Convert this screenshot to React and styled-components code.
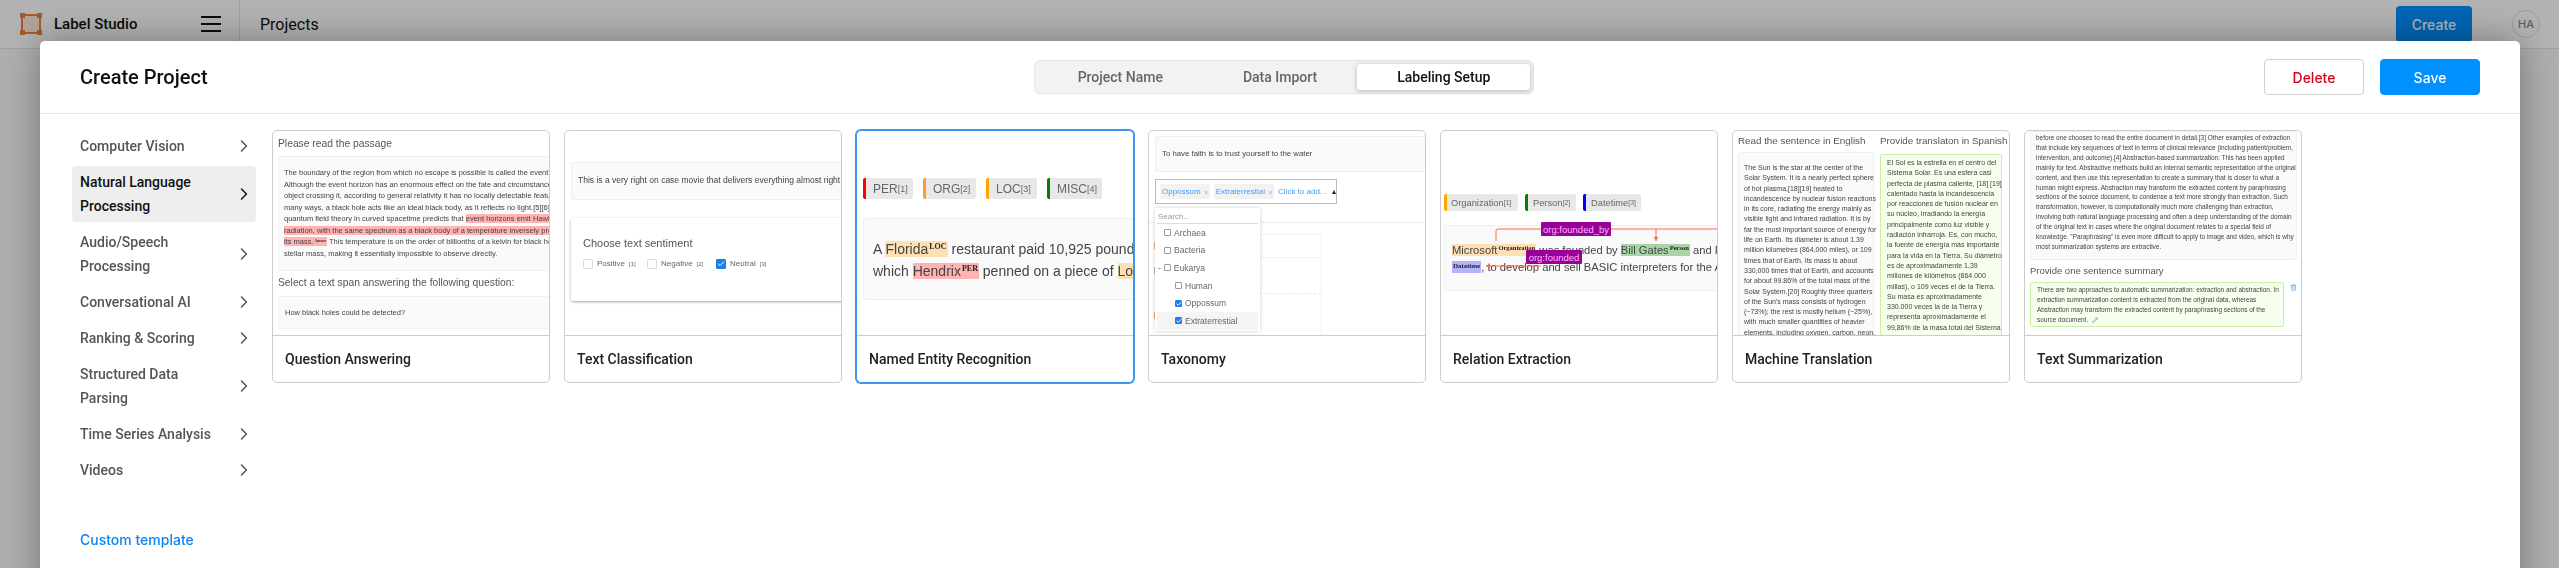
import React from 'react';
import styled, { createGlobalStyle } from 'styled-components';
import { ChevronRight, Check, Trash2, Pencil } from 'lucide-react';

const Global = createGlobalStyle`
  html, body { margin: 0; padding: 0; height: 100%; overflow: hidden; background: #fafafa; }
  * { box-sizing: border-box; }
  body { font-family: Roboto, "Liberation Sans", sans-serif; color: #111; }
`;

const Page = styled.div`
  height: 568px;
  overflow: hidden;
`;

const TopBar = styled.header`
  height: 49px;
  display: flex;
  align-items: center;
  background: #fff;
  border-bottom: 1px solid #e4e4e4;
`;

const Brand = styled.div`
  width: 240px;
  height: 48px;
  display: flex;
  align-items: center;
  padding-left: 20px;
  border-right: 1px solid #e4e4e4;
`;

const BrandName = styled.span`
  font-size: 15px;
  font-weight: 500;
  margin-left: 12px;
  width: 147px;
`;

const BarTitle = styled.span`
  font-size: 16px;
  margin-left: 20px;
  flex: 1;
`;

const CreateButton = styled.button`
  width: 76px;
  height: 36px;
  margin-right: 40px;
  border: 0;
  border-radius: 4px;
  background: #0090ff;
  color: #fff;
  font: 500 14px Inter, sans-serif;
`;

const Avatar = styled.div`
  width: 28px;
  height: 28px;
  margin-right: 19px;
  border-radius: 50%;
  border: 1px solid #ddd;
  display: grid;
  place-items: center;
  font: 500 11px Inter, sans-serif;
  color: #888;
`;

const Overlay = styled.div`
  position: fixed;
  inset: 0;
  padding: 41px 39px 0 40px;
  background: rgba(0, 0, 0, 0.3);
`;

const Modal = styled.div`
  height: 600px;
  background: #fff;
  border-radius: 5px 5px 0 0;
  box-shadow: 0 0 36px rgba(0, 0, 0, 0.35);
`;

const ModalHeader = styled.div`
  height: 73px;
  padding: 0 40px;
  display: grid;
  grid-template-columns: 224px 1fr auto;
  align-items: center;
  border-bottom: 1px solid #e4e4e4;
`;

const Title = styled.h1`
  margin: 0;
  font-size: 20px;
  font-weight: 500;
  white-space: nowrap;
`;

const Tabs = styled.div`
  justify-self: center;
  height: 34px;
  padding: 3px;
  display: flex;
  border: 1px solid #e6e6e6;
  border-radius: 6px;
  background: #f2f2f2;
`;

const Tab = styled.div`
  height: 26px;
  padding: 0 40px;
  display: flex;
  align-items: center;
  font-size: 14px;
  font-weight: 500;
  border-radius: 4px;
  color: ${p => (p.$active ? '#111' : '#666')};
  background: ${p => (p.$active ? '#fff' : 'transparent')};
  box-shadow: ${p => (p.$active ? '0 1px 5px rgba(0,0,0,.25)' : 'none')};
`;

const Actions = styled.div`
  display: flex;
  gap: 16px;
`;

const ActionButton = styled.button`
  width: 100px;
  height: 36px;
  border-radius: 4px;
  font: 500 14px Inter, sans-serif;
  border: 1px solid ${p => (p.$primary ? '#0090ff' : '#d0d0d0')};
  background: ${p => (p.$primary ? '#0090ff' : '#fff')};
  color: ${p => (p.$primary ? '#fff' : '#d0021b')};
`;

const Body = styled.div`
  display: flex;
  padding: 14px 0 0 32px;
`;

const Sidebar = styled.nav`
  width: 184px;
  flex-shrink: 0;
  margin-right: 16px;
  display: flex;
  flex-direction: column;
`;

const SideItem = styled.div`
  margin: 2px 0;
  padding: 4px 8px;
  display: flex;
  align-items: center;
  justify-content: space-between;
  font-size: 14px;
  line-height: 24px;
  font-weight: 500;
  border-radius: 4px;
  color: ${p => (p.$active ? '#111' : '#555')};
  background: ${p => (p.$active ? '#eee' : 'transparent')};
  span { max-width: 145px; }
  svg { flex-shrink: 0; margin-right: -6px; }
`;

const CustomLink = styled.a`
  display: block;
  margin: 40px 0 0 8px;
  font-family: Inter, sans-serif;
  font-size: 14px;
  font-weight: 500;
  line-height: 24px;
  color: #0b84f3;
`;

const Grid = styled.div`
  display: grid;
  grid-template-columns: repeat(7, 278px);
  gap: 14px;
  align-items: start;
  margin-top: 2px;
`;

const Card = styled.div`
  height: 253px;
  border-radius: 5px;
  overflow: hidden;
  background: #fff;
  border: 1px solid #ccc;
  box-shadow: ${p => (p.$selected ? '0 0 0 1px #3d94f0' : 'none')};
  border-color: ${p => (p.$selected ? '#3d94f0' : '#ccc')};
`;

const Preview = styled.div`
  position: relative;
  height: 204px;
  overflow: hidden;
  padding: ${p => p.$pad || '0'};
  font-family: "Liberation Sans", Arial, sans-serif;
  color: #444;
  filter: blur(0.25px);
`;

const CardName = styled.div`
  height: 47px;
  padding-left: 12px;
  display: flex;
  align-items: center;
  font-size: 14px;
  font-weight: 500;
  color: #222;
  border-top: 1px solid #ccc;
`;

const Heading = styled.div`
  font-size: ${p => p.$size || 10.3}px;
  line-height: 12px;
  white-space: nowrap;
  margin-top: ${p => p.$top || 0}px;
  color: #555;
`;

const TextBox = styled.div`
  width: ${p => p.$width || 340}px;
  height: ${p => p.$height}px;
  margin-top: ${p => p.$top || 0}px;
  padding: ${p => p.$pad || '0 6px'};
  background: #fafafa;
  border: 1px solid #f0f0f0;
  border-radius: 2px;
  font-size: ${p => p.$size || 7.5}px;
  line-height: ${p => p.$lh || 11.5}px;
  white-space: nowrap;
  display: ${p => (p.$center ? 'flex' : 'block')};
  align-items: center;
  color: #444;
`;

const Line = styled.div`
  white-space: nowrap;
`;

const Mark = styled.span`
  background: ${p => p.$color || '#ffb3b3'};
  color: #444;
`;

const Tag = styled.sup`
  font: bold ${p => p.$size || 3.5}px "Liberation Serif", serif;
  vertical-align: ${p => p.$up || 2}px;
  line-height: 0;
  color: #222;
  margin: 0 1px;
`;

const Choices = styled.div`
  width: 320px;
  height: 83px;
  margin-top: 18px;
  padding: 19px 12px 0;
  border-radius: 2px;
  background: #fff;
  box-shadow: 0 1px 3px rgba(0, 0, 0, 0.35);
`;

const ChoiceRow = styled.div`
  display: flex;
  margin-top: 9px;
  font-size: 8px;
  line-height: 12px;
  color: #666;
`;

const Choice = styled.label`
  display: flex;
  align-items: center;
  width: ${p => p.$width}px;
  gap: 4px;
`;

const Box = styled.span`
  width: ${p => p.$size || 10}px;
  height: ${p => p.$size || 10}px;
  flex-shrink: 0;
  display: grid;
  place-items: center;
  border-radius: 1px;
  border: 1px solid ${p => (p.$on ? '#1a7ff0' : p.$dark ? '#999' : '#ddd')};
  background: ${p => (p.$on ? '#1a7ff0' : '#fff')};
  color: #fff;
`;

const Small = styled.sup`
  font-size: 75%;
  line-height: 0;
  vertical-align: 30%;
`;

const LabelRow = styled.div`
  display: flex;
  gap: ${p => p.$gap}px;
  margin-top: ${p => p.$top}px;
`;

const EntityLabel = styled.div`
  height: ${p => p.$height}px;
  width: ${p => p.$width}px;
  padding-left: ${p => p.$indent}px;
  display: flex;
  align-items: center;
  white-space: nowrap;
  font-size: ${p => p.$size}px;
  color: #666;
  background: #e8e8e8;
  border-left: 3px solid ${p => p.$color};
  border-radius: 2px;
`;

const MultiSelect = styled.div`
  width: 182px;
  height: 25px;
  margin-top: 7px;
  padding-left: 4px;
  display: flex;
  align-items: center;
  gap: 4px;
  border: 1px solid #bbb;
  font-size: 8px;
  color: #3d9eff;
`;

const Pill = styled.span`
  height: 15px;
  padding: 0 2px;
  display: flex;
  align-items: center;
  gap: 4px;
  white-space: nowrap;
  background: #f2f2f2;
  border-radius: 1px;
  i { font-style: normal; font-size: 6px; color: #999; }
`;

const Caret = styled.span`
  width: 0;
  height: 0;
  margin-left: 1px;
  border: 2.5px solid transparent;
  border-top: 0;
  border-bottom: 4px solid #222;
`;

const FaintRule = styled.div`
  height: 1px;
  margin: 18px 0 0 -6px;
  background: #eee;
`;

const FaintTable = styled.div`
  width: 167px;
  height: 120px;
  margin-top: 11px;
  border: 1px solid #f2f2f2;
  border-left: 0;
`;

const FaintHead = styled.div`
  height: 23px;
  border-bottom: 1px solid #f2f2f2;
`;

const FaintDash = styled.div`
  margin-top: 35px;
  border-top: 1px dashed #e8e8e8;
`;

const Tick = styled.span`
  position: absolute;
  left: 5px;
  top: ${p => p.$y}px;
  width: 1px;
  height: 7px;
  background: #e0b080;
`;

const Dropdown = styled.div`
  position: absolute;
  left: 6px;
  top: 77px;
  width: 105px;
  height: 123px;
  padding: 2px;
  background: #fff;
  box-shadow: 0 0 4px rgba(0, 0, 0, 0.2);
  font-size: 8.5px;
`;

const SearchLine = styled.div`
  height: 14px;
  padding-left: 1px;
  line-height: 13px;
  font-size: 8px;
  color: #999;
  border-bottom: 1px solid #ddd;
`;

const TreeRow = styled.div`
  height: 17.6px;
  padding-left: ${p => p.$indent}px;
  display: flex;
  align-items: center;
  gap: 3px;
  color: #666;
  background: ${p => (p.$hover ? '#f4f4f4' : 'transparent')};
`;

const Overlaid = styled.div`
  position: absolute;
  left: ${p => p.$x}px;
  top: ${p => p.$y}px;
  width: ${p => p.$w}px;
  height: 14px;
  display: grid;
  place-items: center;
  background: #990099;
  border-radius: 1px;
  font-size: 9.5px;
  color: #ffb3ff;
  white-space: nowrap;
`;

const Arrows = styled.svg`
  position: absolute;
  left: 0;
  top: 0;
`;

const Columns = styled.div`
  display: grid;
  grid-template-columns: 136px 122px;
  gap: 6px;
  margin-top: 4px;
`;

const AnswerBox = styled.div`
  margin-top: ${p => p.$top}px;
  width: ${p => p.$width}px;
  height: ${p => p.$height || 'auto'};
  padding: ${p => p.$pad};
  background: #f6ffed;
  border: 1px solid #c9efa8;
  border-radius: 2px;
  font-size: ${p => p.$size}px;
  line-height: ${p => p.$lh}px;
  color: #444;
`;

const TrashIcon = styled(Trash2)`
  position: absolute;
  left: 265px;
  top: 153px;
  color: #3d9eff;
`;

const PenIcon = styled(Pencil)`
  margin-left: 2px;
  color: #3d9eff;
  vertical-align: -1px;
`;

const Logo = () => (
  <svg width="22" height="22" viewBox="0 0 22 22">
    <rect x="2" y="2" width="18" height="18" fill="#ffeadb" />
    <rect x="2" y="2" width="18" height="18" fill="none" stroke="#ec8140" strokeWidth="2" />
    <rect x="0" y="0" width="5" height="5" fill="#ec8140" />
    <rect x="17" y="0" width="5" height="5" fill="#ec8140" />
    <rect x="0" y="17" width="5" height="5" fill="#ec8140" />
    <rect x="17" y="17" width="5" height="5" fill="#ec8140" />
  </svg>
);

const Burger = () => (
  <svg width="20" height="16" viewBox="0 0 20 16">
    <path d="M0 1h20M0 8h20M0 15h20" stroke="#111" strokeWidth="2" />
  </svg>
);

const passage = [
  'The boundary of the region from which no escape is possible is called the event horizon.',
  'Although the event horizon has an enormous effect on the fate and circumstances of an',
  'object crossing it, according to general relativity it has no locally detectable features. In',
  'many ways, a black hole acts like an ideal black body, as it reflects no light.[5][6] Moreover,',
];

const sunLines = [
  'The Sun is the star at the center of the',
  'Solar System. It is a nearly perfect sphere',
  'of hot plasma,[18][19] heated to',
  'incandescence by nuclear fusion reactions',
  'in its core, radiating the energy mainly as',
  'visible light and infrared radiation. It is by',
  'far the most important source of energy for',
  'life on Earth. Its diameter is about 1.39',
  'million kilometres (864,000 miles), or 109',
  'times that of Earth. Its mass is about',
  '330,000 times that of Earth, and accounts',
  'for about 99.86% of the total mass of the',
  'Solar System.[20] Roughly three quarters',
  "of the Sun's mass consists of hydrogen",
  '(~73%); the rest is mostly helium (~25%),',
  'with much smaller quantities of heavier',
  'elements, including oxygen, carbon, neon,',
];

const solLines = [
  'El Sol es la estrella en el centro del',
  'Sistema Solar. Es una esfera casi',
  'perfecta de plasma caliente, [18] [19]',
  'calentado hasta la incandescencia',
  'por reacciones de fusión nuclear en',
  'su núcleo, irradiando la energía',
  'principalmente como luz visible y',
  'radiación infrarroja. Es, con mucho,',
  'la fuente de energía más importante',
  'para la vida en la Tierra. Su diámetro',
  'es de aproximadamente 1,39',
  'millones de kilómetros (864.000',
  'millas), o 109 veces el de la Tierra.',
  'Su masa es aproximadamente',
  '330.000 veces la de la Tierra y',
  'representa aproximadamente el',
  '99,86% de la masa total del Sistema',
  'Solar. Alrededor de tres cuartos',
];

const summaryLines = [
  'before one chooses to read the entire document in detail.[3] Other examples of extraction',
  'that include key sequences of text in terms of clinical relevance (including patient/problem,',
  'intervention, and outcome).[4] Abstraction-based summarization: This has been applied',
  'mainly for text. Abstractive methods build an internal semantic representation of the original',
  'content, and then use this representation to create a summary that is closer to what a',
  'human might express. Abstraction may transform the extracted content by paraphrasing',
  'sections of the source document, to condense a text more strongly than extraction. Such',
  'transformation, however, is computationally much more challenging than extraction,',
  'involving both natural language processing and often a deep understanding of the domain',
  'of the original text in cases where the original document relates to a special field of',
  'knowledge. "Paraphrasing" is even more difficult to apply to image and video, which is why',
  'most summarization systems are extractive.',
];

const QuestionPreview = () => (
  <Preview $pad="0 0 0 5px">
    <Heading $top={7} $size={10.3}>Please read the passage</Heading>
    <TextBox $top={6} $height={115} $pad="10px 5px">
      {passage.map(l => <Line key={l}>{l}</Line>)}
      <Line>quantum field theory in curved spacetime predicts that <Mark>event horizons emit Hawking</Mark></Line>
      <Line><Mark>radiation, with the same spectrum as a black body of a temperature inversely proportional to</Mark></Line>
      <Line><Mark>its mass.<Tag>Answer</Tag></Mark> This temperature is on the order of billionths of a kelvin for black holes of</Line>
      <Line>stellar mass, making it essentially impossible to observe directly.</Line>
    </TextBox>
    <Heading $top={6} $size={10.3}>Select a text span answering the following question:</Heading>
    <TextBox $top={7} $height={33} $center>How black holes could be detected?</TextBox>
  </Preview>
);

const ClassificationPreview = () => (
  <Preview $pad="31px 0 0 6px">
    <TextBox $height={38} $center $size={8.5}>This is a very right on case movie that delivers everything almost right in your face.</TextBox>
    <Choices>
      <Heading $size={11}>Choose text sentiment</Heading>
      <ChoiceRow>
        <Choice $width={64}><Box />Positive<Small>[1]</Small></Choice>
        <Choice $width={69}><Box />Negative<Small>[2]</Small></Choice>
        <Choice><Box $on><Check size={8} strokeWidth={3} /></Box>Neutral<Small>[3]</Small></Choice>
      </ChoiceRow>
    </Choices>
  </Preview>
);

const NerPreview = () => (
  <Preview $pad="47px 0 0 6px">
    <LabelRow $gap={10} $top={0}>
      <EntityLabel $width={50} $height={21} $indent={7} $size={12} $color="#f00">PER<Small>[1]</Small></EntityLabel>
      <EntityLabel $width={53} $height={21} $indent={7} $size={12} $color="#f93">ORG<Small>[2]</Small></EntityLabel>
      <EntityLabel $width={51} $height={21} $indent={7} $size={12} $color="orange">LOC<Small>[3]</Small></EntityLabel>
      <EntityLabel $width={55} $height={21} $indent={7} $size={12} $color="green">MISC<Small>[4]</Small></EntityLabel>
    </LabelRow>
    <TextBox $top={19} $height={82} $width={360} $pad="19px 9px" $size={14} $lh={22}>
      <Line>A <Mark $color="#ffe0b3">Florida<Tag $size={8} $up={5}>LOC</Tag></Mark> restaurant paid 10,925 pounds for the drum kit</Line>
      <Line>which <Mark>Hendrix<Tag $size={8} $up={5}>PER</Tag></Mark> penned on a piece of <Mark $color="#ffe0b3">London</Mark> hotel</Line>
    </TextBox>
  </Preview>
);

const TaxonomyPreview = () => (
  <Preview $pad="5px 0 0 6px">
    <TextBox $height={36} $center $size={7.8}>To have faith is to trust yourself to the water</TextBox>
    <MultiSelect>
      <Pill>Oppossum <i>x</i></Pill>
      <Pill>Extraterrestial <i>x</i></Pill>
      <span>Click to add...</span>
      <Caret />
    </MultiSelect>
    <FaintRule />
    <FaintTable>
      <FaintHead />
      <FaintDash />
    </FaintTable>
    <Tick $y={111} />
    <Tick $y={136} />
    <Tick $y={181} />
    <Dropdown>
      <SearchLine>Search...</SearchLine>
      <TreeRow $indent={7}><Box $size={7} $dark />Archaea</TreeRow>
      <TreeRow $indent={7}><Box $size={7} $dark />Bacteria</TreeRow>
      <TreeRow $indent={1}>- <Box $size={7} $dark />Eukarya</TreeRow>
      <TreeRow $indent={18}><Box $size={7} $dark />Human</TreeRow>
      <TreeRow $indent={18}><Box $size={7} $on><Check size={6} strokeWidth={4} /></Box>Oppossum</TreeRow>
      <TreeRow $indent={18} $hover><Box $size={7} $on><Check size={6} strokeWidth={4} /></Box>Extraterrestial</TreeRow>
    </Dropdown>
  </Preview>
);

const RelationPreview = () => (
  <Preview $pad="63px 0 0 3px">
    <LabelRow $gap={7} $top={0}>
      <EntityLabel $width={74} $height={17} $indent={4} $size={9.3} $color="orange">Organization<Small>[1]</Small></EntityLabel>
      <EntityLabel $width={51} $height={17} $indent={5} $size={9.3} $color="green">Person<Small>[2]</Small></EntityLabel>
      <EntityLabel $width={58} $height={17} $indent={5} $size={9.3} $color="blue">Datetime<Small>[3]</Small></EntityLabel>
    </LabelRow>
    <TextBox $top={14} $height={66} $width={340} $pad="16px 7px" $size={11.2} $lh={17}>
      <Line><Mark $color="#ffe0b3">Microsoft<Tag $size={6.5} $up={4}>Organization</Tag></Mark> was founded by <Mark $color="#a8d5a8">Bill Gates<Tag $size={6.5} $up={4}>Person</Tag></Mark> and Paul Allen</Line>
      <Line><Mark $color="#b3b3ff"><Tag $size={7} $up={3}>Datetime</Tag></Mark>, to develop and sell BASIC interpreters for the Altair</Line>
    </TextBox>
    <Arrows width="278" height="204" viewBox="0 0 278 204" fill="none">
      <path d="M55 110V100a2 2 0 0 1 2-2H278" stroke="#ff6a45" strokeWidth="1" />
      <path d="M215 98v12" stroke="#ff6a45" strokeWidth="1" />
      <path d="M212.5 106h5l-2.5 4z" fill="#ff6a45" />
      <path d="M45 135H100" stroke="#ff6a45" strokeWidth="1" />
      <path d="M45 135l4-2.5v5z" fill="#ff6a45" />
    </Arrows>
    <Overlaid $x={100} $y={91} $w={70}>org:founded_by</Overlaid>
    <Overlaid $x={85} $y={119} $w={56}>org:founded</Overlaid>
  </Preview>
);

const TranslationPreview = () => (
  <Preview $pad="0 0 0 5px">
    <Columns>
      <Heading $size={9.8}>Read the sentence in English</Heading>
      <Heading $size={9.8}>Provide translaton in Spanish</Heading>
    </Columns>
    <Columns>
      <TextBox $width={136} $height={240} $pad="10px 5px" $size={7} $lh={10.3} $top={1}>
        {sunLines.map(l => <Line key={l}>{l}</Line>)}
      </TextBox>
      <AnswerBox $top={3} $width={122} $height="240px" $pad="3px 6px" $size={7} $lh={10.3}>
        {solLines.map(l => <Line key={l}>{l}</Line>)}
      </AnswerBox>
    </Columns>
  </Preview>
);

const SummaryPreview = () => (
  <Preview $pad="0 0 0 5px">
    <TextBox $width={267} $height={129} $pad="1px 5px" $size={6.45} $lh={9.9}>
      {summaryLines.map(l => <Line key={l}>{l}</Line>)}
    </TextBox>
    <Heading $top={5} $size={9.5}>Provide one sentence summary</Heading>
    <AnswerBox $top={5} $width={254} $height="45px" $pad="2px 6px" $size={6.45} $lh={9.9}>
      <Line>There are two approaches to automatic summarization: extraction and abstraction. In</Line>
      <Line>extraction summarization content is extracted from the original data, whereas</Line>
      <Line>Abstraction may transform the extracted content by paraphrasing sections of the</Line>
      <Line>source document. <PenIcon size={6} strokeWidth={2.5} /></Line>
    </AnswerBox>
    <TrashIcon size={7} strokeWidth={2} />
  </Preview>
);

const sections = [
  { name: 'Computer Vision' },
  { name: 'Natural Language Processing', active: true },
  { name: 'Audio/Speech Processing' },
  { name: 'Conversational AI' },
  { name: 'Ranking & Scoring' },
  { name: 'Structured Data Parsing' },
  { name: 'Time Series Analysis' },
  { name: 'Videos' },
];

const templates = [
  { name: 'Question Answering', preview: <QuestionPreview /> },
  { name: 'Text Classification', preview: <ClassificationPreview /> },
  { name: 'Named Entity Recognition', preview: <NerPreview />, selected: true },
  { name: 'Taxonomy', preview: <TaxonomyPreview /> },
  { name: 'Relation Extraction', preview: <RelationPreview /> },
  { name: 'Machine Translation', preview: <TranslationPreview /> },
  { name: 'Text Summarization', preview: <SummaryPreview /> },
];

export default function App() {
  return (
    <Page>
      <Global />
      <TopBar>
        <Brand>
          <Logo />
          <BrandName>Label Studio</BrandName>
          <Burger />
        </Brand>
        <BarTitle>Projects</BarTitle>
        <CreateButton>Create</CreateButton>
        <Avatar>HA</Avatar>
      </TopBar>
      <Overlay>
        <Modal>
          <ModalHeader>
            <Title>Create Project</Title>
            <Tabs>
              <Tab>Project Name</Tab>
              <Tab>Data Import</Tab>
              <Tab $active>Labeling Setup</Tab>
            </Tabs>
            <Actions>
              <ActionButton>Delete</ActionButton>
              <ActionButton $primary>Save</ActionButton>
            </Actions>
          </ModalHeader>
          <Body>
            <Sidebar>
              {sections.map(s => (
                <SideItem key={s.name} $active={s.active}>
                  <span>{s.name}</span>
                  <ChevronRight size={20} strokeWidth={1.8} />
                </SideItem>
              ))}
              <CustomLink>Custom template</CustomLink>
            </Sidebar>
            <Grid>
              {templates.map(t => (
                <Card key={t.name} $selected={t.selected}>
                  {t.preview}
                  <CardName>{t.name}</CardName>
                </Card>
              ))}
            </Grid>
          </Body>
        </Modal>
      </Overlay>
    </Page>
  );
}
